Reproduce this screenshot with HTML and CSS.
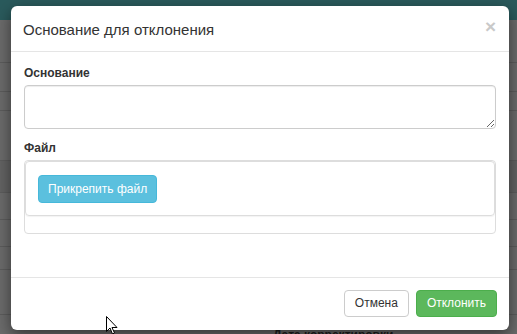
FILE: index.html
```html
<!DOCTYPE html>
<html lang="ru">
<head>
    <meta charset="UTF-8">
    <title>Основание для отклонения</title>
    <link rel="stylesheet" href="styles.css">
</head>
<body>

    <!-- Page behind the backdrop -->
    <div class="page">
        <div class="navbar"></div>
        <div class="row" style="height: 43px"></div>
        <div class="row" style="height: 29px"></div>
        <div class="row" style="height: 19px"></div>
        <div class="row" style="height: 50px"></div>
        <div class="row row-dark" style="height: 32px"></div>
        <div class="row" style="height: 27px"></div>
        <div class="row" style="height: 27px"></div>
        <div class="row" style="height: 23px"></div>
        <div class="row" style="height: 45px"></div>
        <div class="row row-text"><span>Дата корректировки</span></div>
    </div>

    <!-- Modal dialog -->
    <div class="modal">
        <div class="modal-header">
            <h4 class="modal-title">Основание для отклонения</h4>
            <button class="close" type="button">&times;</button>
        </div>

        <div class="modal-body">
            <div class="form-group">
                <label>Основание</label>
                <textarea class="form-control"></textarea>
            </div>
            <div class="form-group last">
                <label>Файл</label>
                <div class="file-box">
                    <div class="file-panel">
                        <button class="btn btn-info" type="button">Прикрепить файл</button>
                    </div>
                </div>
            </div>
        </div>

        <div class="modal-footer">
            <button class="btn btn-default" type="button">Отмена</button>
            <button class="btn btn-success" type="button">Отклонить</button>
        </div>
    </div>

    <!-- Mouse pointer -->
    <svg class="cursor" width="12" height="19" viewBox="0 0 12 19">
        <path d="M0.5 0.5 L0.5 15.5 L4 12 L6.5 18 L8.5 17 L6 11.5 L11 11.5 Z" fill="#fff" stroke="#000" stroke-width="1"/>
    </svg>

</body>
</html>
```

FILE: styles.css
```css
html, body {
    margin: 0;
    height: 100%;
    overflow: hidden;
    font-family: "Liberation Sans", Arial, sans-serif;
    font-size: 12px;
    color: #333;
    background: #6b6b6b;
}

/* Page under the backdrop */
.page {
    display: flex;
    flex-direction: column;
}

.navbar {
    height: 20px;
    background: #2a5a5c;
}

.row {
    border-bottom: 1px solid #5c5c5c;
    box-sizing: border-box;
}

.row-dark {
    background: #636363;
}

.row-text {
    height: 30px;
    padding: 13px 0 0 273px;
    font-weight: bold;
    color: #1e1e1e;
    border-bottom: none;
}

/* Modal */
.modal {
    position: absolute;
    top: 6px;
    left: 11px;
    width: 498px;
    background: #fff;
    border-radius: 6px;
    box-shadow: 0 5px 15px rgba(0, 0, 0, 0.5);
}

.modal-header {
    display: flex;
    justify-content: space-between;
    align-items: flex-start;
    padding: 13px 13px 11px 12px;
    border-bottom: 1px solid #e5e5e5;
}

.modal-title {
    margin: 0;
    font-size: 15px;
    font-weight: normal;
    line-height: 21px;
    color: #333;
}

.close {
    border: none;
    background: none;
    padding: 0;
    margin-top: -2px;
    font-family: "Liberation Sans", Arial, sans-serif;
    font-size: 19px;
    font-weight: bold;
    line-height: 1;
    color: #c9c9c9;
    cursor: pointer;
}

.modal-body {
    padding: 13px 13px 43px 13px;
}

.form-group {
    margin-bottom: 11px;
}

.form-group.last {
    margin-bottom: 0;
}

label {
    display: block;
    font-weight: bold;
    line-height: 17px;
    margin-bottom: 3px;
}

.form-control {
    display: block;
    width: 100%;
    height: 44px;
    box-sizing: border-box;
    border: 1px solid #ccc;
    border-radius: 4px;
    box-shadow: inset 0 1px 1px rgba(0, 0, 0, 0.075);
    font-family: inherit;
    font-size: 12px;
    padding: 5px 10px;
    margin: 0;
}

.file-box {
    border: 1px solid #ddd;
    border-radius: 4px;
    padding-bottom: 17px;
}

.file-panel {
    border: 1px solid #ddd;
    border-radius: 4px;
    padding: 13px 12px 12px 12px;
    box-shadow: 0 1px 1px rgba(0, 0, 0, 0.05);
}

/* Buttons */
.btn {
    height: 27px;
    padding: 0 10px;
    font-family: "Liberation Sans", Arial, sans-serif;
    font-size: 12px;
    line-height: 25px;
    border: 1px solid transparent;
    border-radius: 4px;
    cursor: pointer;
}

.btn-info {
    height: 28px;
    padding: 0 9px;
    color: #fff;
    background: #5bc0de;
    border-color: #46b8da;
}

.btn-default {
    color: #333;
    background: #fff;
    border-color: #ccc;
}

.btn-success {
    color: #fff;
    background: #5cb85c;
    border-color: #4cae4c;
}

.modal-footer {
    display: flex;
    justify-content: flex-end;
    gap: 7px;
    padding: 12px 12px 13px 12px;
    border-top: 1px solid #e5e5e5;
}

.cursor {
    position: absolute;
    left: 106px;
    top: 316px;
}
```
